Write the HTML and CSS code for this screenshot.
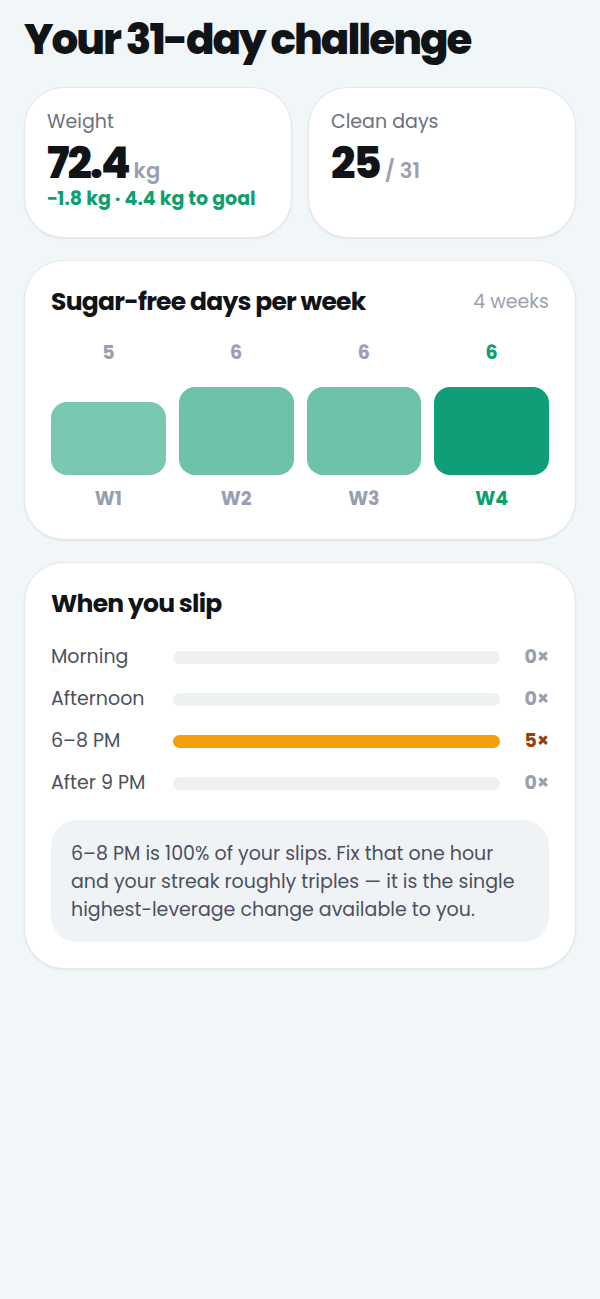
FILE: index.html
```html
<!DOCTYPE html>
<html lang="en">
<head>
  <meta charset="UTF-8">
  <meta name="viewport" content="width=device-width, initial-scale=1">
  <title>Your 31-day challenge</title>
  <link rel="stylesheet" href="styles.css">
</head>
<body>
<main class="page">
  <h1>Your 31-day challenge</h1>

  <section class="stats">
    <div class="card stat">
      <div class="stat-label">Weight</div>
      <div class="stat-value">72.4<span class="unit"> kg</span></div>
      <div class="stat-note">−1.8 kg · 4.4 kg to goal</div>
    </div>
    <div class="card stat">
      <div class="stat-label">Clean days</div>
      <div class="stat-value">25<span class="unit"> / 31</span></div>
    </div>
  </section>

  <section class="card">
    <div class="card-head">
      <h2>Sugar-free days per week</h2>
      <span class="card-meta">4 weeks</span>
    </div>
    <div class="weeks">
      <div class="week">
        <span class="week-count">5</span>
        <div class="week-plot"><div class="week-bar low" style="height: 83%"></div></div>
        <span class="week-name">W1</span>
      </div>
      <div class="week">
        <span class="week-count">6</span>
        <div class="week-plot"><div class="week-bar" style="height: 100%"></div></div>
        <span class="week-name">W2</span>
      </div>
      <div class="week">
        <span class="week-count">6</span>
        <div class="week-plot"><div class="week-bar" style="height: 100%"></div></div>
        <span class="week-name">W3</span>
      </div>
      <div class="week current">
        <span class="week-count">6</span>
        <div class="week-plot"><div class="week-bar" style="height: 100%"></div></div>
        <span class="week-name">W4</span>
      </div>
    </div>
  </section>

  <section class="card">
    <h2>When you slip</h2>
    <div class="slips">
      <div class="slip">
        <span>Morning</span>
        <div class="track"><div class="fill" style="width: 0%"></div></div>
        <span class="slip-count">0×</span>
      </div>
      <div class="slip">
        <span>Afternoon</span>
        <div class="track"><div class="fill" style="width: 0%"></div></div>
        <span class="slip-count">0×</span>
      </div>
      <div class="slip peak">
        <span>6–8 PM</span>
        <div class="track"><div class="fill" style="width: 100%"></div></div>
        <span class="slip-count">5×</span>
      </div>
      <div class="slip">
        <span>After 9 PM</span>
        <div class="track"><div class="fill" style="width: 0%"></div></div>
        <span class="slip-count">0×</span>
      </div>
    </div>
    <p class="insight">6–8 PM is 100% of your slips. Fix that one hour and your streak roughly triples — it is the single highest-leverage change available to you.</p>
  </section>
</main>
</body>
</html>
```

FILE: styles.css
```css
* {
  box-sizing: border-box;
}
body {
  margin: 0;
  background: #f1f6f9;
  color: #111417;
  font-family: Poppins, Inter, "Open Sans", sans-serif;
  font-size: 19px;
  line-height: 28px;
}
.page {
  display: flex;
  flex-direction: column;
  gap: 22px;
  padding: 15px 24px;
}
h1, h2, p {
  margin: 0;
}
h1 {
  font-size: 42px;
  line-height: 50px;
  font-weight: 800;
  letter-spacing: -2px;
}
h2 {
  font-size: 25px;
  line-height: 32px;
  font-weight: 700;
  letter-spacing: -0.03em;
}
.card {
  background: #fff;
  border: 1px solid #e6e8ec;
  border-radius: 40px;
  box-shadow: 0 1px 2px rgba(17, 20, 23, 0.08);
  padding: 25px 26px 26px;
}

/* Stats */
.stats {
  display: grid;
  grid-template-columns: 1fr 1fr;
  gap: 16px;
}
.stat {
  padding: 22px 22px 26px;
  line-height: 24px;
}
.stat-label {
  color: #6b7080;
}
.stat-value {
  margin: 7px 0 2px;
  font-size: 43px;
  line-height: 44px;
  font-weight: 800;
  letter-spacing: -2px;
}
.unit {
  color: #9a9fb0;
  font-size: 21px;
  line-height: 21px;
  font-weight: 600;
  letter-spacing: normal;
}
.stat-note {
  color: #0f9f6e;
  font-weight: 700;
}

/* Weekly chart */
.card-head {
  display: flex;
  justify-content: space-between;
  align-items: center;
}
.card-meta {
  color: #9a9fb0;
}
.weeks {
  display: grid;
  grid-template-columns: repeat(4, 1fr);
  gap: 13px;
  margin-top: 21px;
  color: #9a9fb0;
  font-weight: 700;
  text-align: center;
}
.week {
  display: flex;
  flex-direction: column;
}
.week-plot {
  display: flex;
  align-items: flex-end;
  height: 88px;
  margin: 20px 0 10px;
}
.week-bar {
  width: 100%;
  background: #6cc3aa;
  border-radius: 16px;
}
.week-bar.low {
  background: #78c8b2;
}
.current {
  color: #0f9f6e;
}
.current .week-bar {
  background: #109e78;
}

/* Slips */
.slips {
  display: flex;
  flex-direction: column;
  gap: 14px;
  margin-top: 23px;
}
.slip {
  display: grid;
  grid-template-columns: 109px 1fr 36px;
  gap: 13px;
  align-items: center;
  color: #4b5060;
}
.track {
  height: 13px;
  background: #eef1f1;
  border-radius: 8px;
  overflow: hidden;
}
.fill {
  height: 100%;
  background: #f59e0b;
}
.slip-count {
  color: #9a9fb0;
  font-weight: 700;
  text-align: right;
}
.peak .slip-count {
  color: #92400e;
}
.insight {
  margin-top: 23px;
  padding: 20px 20px 18px;
  background: #f0f3f6;
  border-radius: 26px;
  color: #4b5060;
}
```
